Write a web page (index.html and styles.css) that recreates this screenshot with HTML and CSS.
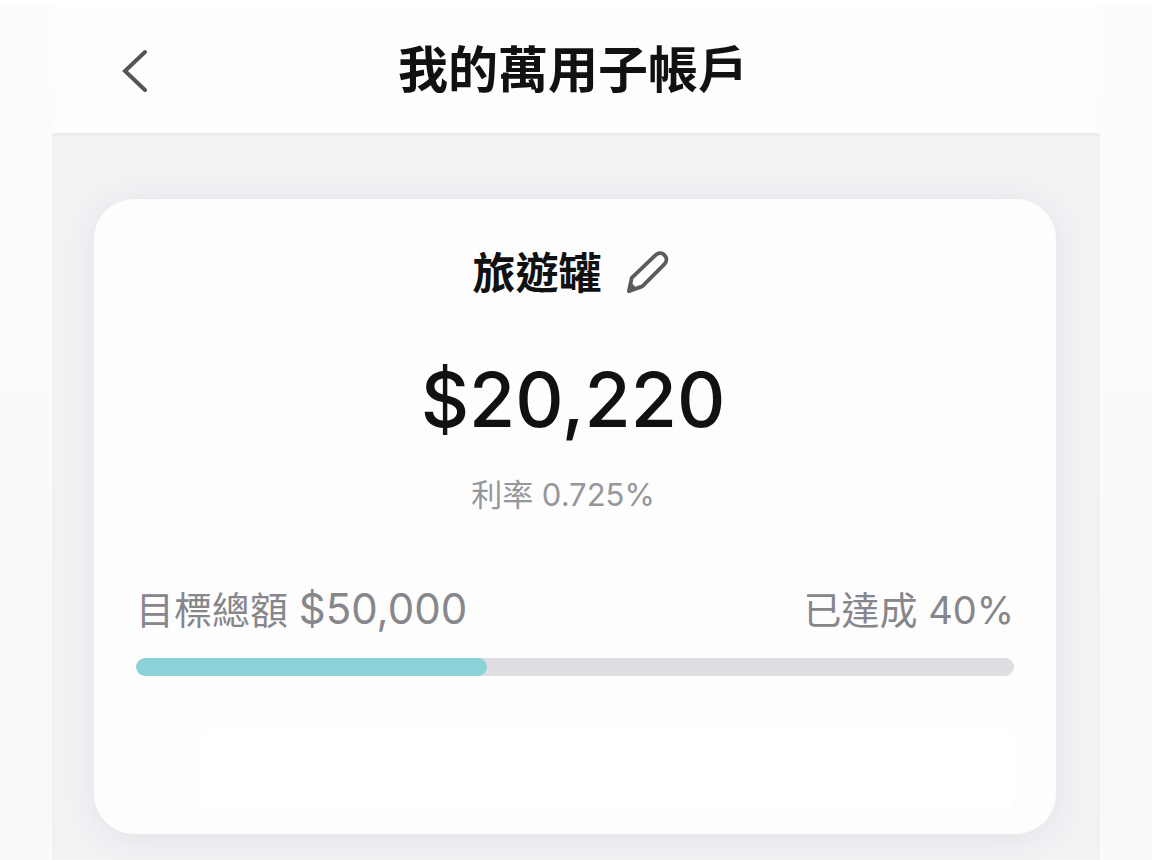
FILE: index.html
```html
<!DOCTYPE html>
<html lang="zh-Hant">
<head>
<meta charset="UTF-8">
<meta name="viewport" content="width=device-width, initial-scale=1.0">
<title>我的萬用子帳戶</title>
<link rel="stylesheet" href="styles.css">
</head>
<body>

  <div class="screen">
    <header class="header">
      <button class="icon-button" type="button" aria-label="返回">
        <svg class="back-icon" viewBox="0 0 28 46" fill="none" stroke="#555" stroke-width="4" stroke-linecap="round">
          <path d="M25 5 L5 24 L25 43"/>
        </svg>
      </button>
      <h1 class="title">我的萬用子帳戶</h1>
    </header>

    <main class="content">
      <section class="card">
        <div class="name-row">
          <h2 class="name">旅遊罐</h2>
          <button class="icon-button" type="button" aria-label="編輯名稱">
            <svg class="edit-icon" viewBox="0 0 46 46" fill="none" stroke="#5c5c60" stroke-width="4" stroke-linecap="round" stroke-linejoin="round">
              <path d="M3 42 L6 28 L30 5 C33 2 37 1 40 4 C43 7 43 11 40 14 L17 37 Z"/>
              <path d="M3 42 L5 34 L10 39 Z" fill="#5c5c60" stroke-width="2"/>
            </svg>
          </button>
        </div>

        <p class="balance">$20,220</p>
        <p class="rate">利率 0.725%</p>

        <div class="goal-row">
          <p class="goal">目標總額 <span class="goal-amount">$50,000</span></p>
          <p class="goal">已達成 40%</p>
        </div>
        <div class="progress" role="progressbar" aria-valuenow="40" aria-valuemin="0" aria-valuemax="100" aria-label="已達成">
          <div class="progress-bar" style="width: 40%"></div>
        </div>

        <div class="note"></div>
      </section>
    </main>
  </div>

</body>
</html>
```
FILE: styles.css
```css
* {
  box-sizing: border-box;
}

body {
  margin: 0;
  padding-top: 6px;
  background: linear-gradient(#fff 6px, #fcfcfc 6px, #fafafa 50%, #f8f9fb 90%, #fafafa);
  font-family: Inter, "Noto Sans CJK TC", sans-serif;
  color: #111;
}

h1,
h2,
p {
  margin: 0;
}

.screen {
  display: flex;
  flex-direction: column;
  min-height: calc(100vh - 6px);
  margin: 0 52px;
  background-color: #f1f2f4;
}

.header {
  display: grid;
  grid-template-columns: 60px 1fr 60px;
  align-items: center;
  height: 130px;
  padding: 0 58px 0 52px;
  background-color: #fdfdfd;
  border-bottom: 3px solid #ececee;
}

.icon-button {
  display: flex;
  justify-content: center;
  width: 60px;
  padding: 8px 0;
  border: none;
  background: none;
  cursor: pointer;
}

.back-icon {
  width: 28px;
  height: 46px;
}

.title {
  font-size: 50px;
  line-height: 60px;
  font-weight: 700;
  text-align: center;
}

.content {
  padding: 63px 44px 26px 42px;
}

.card {
  padding: 44px 42px 24px;
  border-radius: 40px;
  background-color: #fdfdfd;
  box-shadow: 0 4px 32px rgba(60, 60, 80, 0.08);
}

.name-row {
  display: flex;
  justify-content: center;
  align-items: center;
  gap: 16px;
}

.name {
  font-size: 43px;
  line-height: 60px;
  font-weight: 700;
}

.edit-icon {
  width: 44px;
  height: 44px;
}

.balance {
  margin-top: 52px;
  padding-right: 4px;
  font-size: 75px;
  line-height: 90px;
  font-weight: 500;
  text-align: center;
}

.rate {
  margin-top: 30px;
  padding-right: 24px;
  font-size: 31px;
  line-height: 40px;
  text-align: center;
  color: #96969b;
}

.goal-row {
  display: flex;
  justify-content: space-between;
  align-items: baseline;
  margin-top: 64px;
}

.goal {
  font-size: 38px;
  line-height: 60px;
  color: #86868b;
}

.goal-amount {
  font-size: 42px;
}

.progress {
  height: 18px;
  margin-top: 18px;
  border-radius: 9px;
  background-color: #dddde2;
  overflow: hidden;
}

.progress-bar {
  height: 100%;
  border-radius: 9px;
  background-color: #8bd2d8;
}

.note {
  height: 80px;
  margin: 54px 0 0 64px;
  border-radius: 8px;
  background-color: #fff;
}
```
